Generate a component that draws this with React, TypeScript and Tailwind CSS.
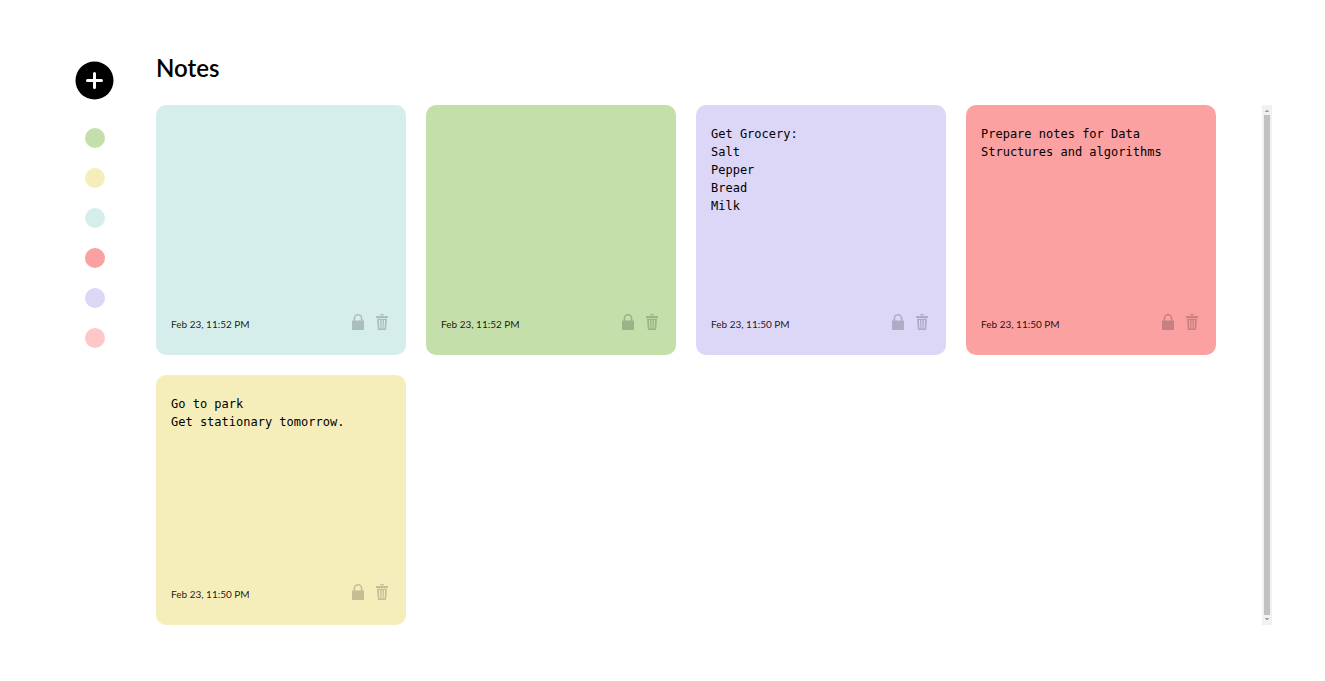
import { useState } from "react";

type Note = { id: number; text: string; color: string; date: string };

const palette = [
  { name: "Green", bg: "bg-[#c5dfaa]" },
  { name: "Yellow", bg: "bg-[#f5eebb]" },
  { name: "Aqua", bg: "bg-[#d6eeeb]" },
  { name: "Red", bg: "bg-[#fba1a1]" },
  { name: "Lavender", bg: "bg-[#dcd6f7]" },
  { name: "Pink", bg: "bg-[#ffc7c7]" },
];

const initialNotes: Note[] = [
  { id: 5, text: "", color: "bg-[#d6eeeb]", date: "Feb 23, 11:52 PM" },
  { id: 4, text: "", color: "bg-[#c5dfaa]", date: "Feb 23, 11:52 PM" },
  { id: 3, text: "Get Grocery:\nSalt\nPepper\nBread\nMilk", color: "bg-[#dcd6f7]", date: "Feb 23, 11:50 PM" },
  { id: 2, text: "Prepare notes for Data Structures and algorithms", color: "bg-[#fba1a1]", date: "Feb 23, 11:50 PM" },
  { id: 1, text: "Go to park\nGet stationary tomorrow.", color: "bg-[#f5eebb]", date: "Feb 23, 11:50 PM" },
];

function LockIcon() {
  return (
    <svg width="12" height="16" viewBox="0 0 12 16" aria-hidden="true">
      <path
        d="M0 7Q0 6.4.6 6.4H1.6V4.4a4.4 4.4 0 0 1 8.8 0V6.4h1Q12 6.4 12 7v8.4Q12 16 11.4 16H.6Q0 16 0 15.4zM3.2 6.4h5.6V4.4a2.8 2.8 0 0 0-5.6 0z"
        fill="currentColor"
        fillRule="evenodd"
      />
    </svg>
  );
}

function TrashIcon() {
  return (
    <svg width="12" height="16" viewBox="0 0 12 16" aria-hidden="true">
      <path
        d="M4 1.2Q4 0 5 0h2q1 0 1 1.2zM.5 2h11q.5 0 .5.5V4H0V2.5Q0 2 .5 2z"
        fill="currentColor"
      />
      <path
        fillRule="evenodd"
        d="M1 4.8h10l-.8 10.4q-.1.8-.8.8H2.6q-.7 0-.8-.8zM2.9 6l.5 8.5h1L4 6zM5.5 6v8.5h1V6zM8 6l-.4 8.5h1L9.1 6z"
        fill="currentColor"
      />
    </svg>
  );
}

function NoteCard({ note, onEdit, onDelete }: { note: Note; onEdit: (text: string) => void; onDelete: () => void }) {
  return (
    <article className={`flex h-[250px] w-[250px] flex-col rounded-[10px] px-[15px] pt-5 pb-[23px] ${note.color}`}>
      <textarea
        aria-label="Note text"
        value={note.text}
        onChange={(e) => onEdit(e.target.value)}
        className="min-h-0 w-full flex-1 resize-none overflow-hidden bg-transparent font-['DejaVu_Sans_Mono',monospace] text-[12px] leading-[18px] text-black outline-none"
      />
      <footer className="flex items-end justify-between pr-[3px]">
        <time className="text-[10px] leading-4 text-black/90">{note.date}</time>
        <div className="flex gap-3 pb-0.5 text-black/20">
          <button type="button" aria-label="Lock note">
            <LockIcon />
          </button>
          <button type="button" aria-label="Delete note" onClick={onDelete}>
            <TrashIcon />
          </button>
        </div>
      </footer>
    </article>
  );
}

export default function App() {
  const [notes, setNotes] = useState(initialNotes);

  const addNote = (color: string) => {
    const now = new Date();
    const date = now
      .toLocaleString("en-US", { month: "short", day: "numeric", hour: "numeric", minute: "2-digit" });
    setNotes((list) => [{ id: now.getTime(), text: "", color, date }, ...list]);
  };

  return (
    <div className="flex min-h-screen bg-white px-[53px] pb-14 font-[Lato,sans-serif] text-black">
      <aside className="flex w-[103px] shrink-0 flex-col items-start gap-7 pt-[61px] pl-[22px]">
        <button type="button" aria-label="Add note" onClick={() => addNote(palette[0].bg)}>
          <svg width="39" height="39" viewBox="0 0 39 39" aria-hidden="true">
            <circle cx="19.5" cy="19.5" r="19" fill="#000" />
            <path d="M19.5 12.5v14M12.5 19.5h14" stroke="#fff" strokeWidth="3" strokeLinecap="round" />
          </svg>
        </button>
        <div className="flex w-10 flex-col items-center gap-5">
          {palette.map((c) => (
            <button
              key={c.name}
              type="button"
              aria-label={`Add ${c.name} note`}
              onClick={() => addNote(c.bg)}
              className={`size-5 rounded-full ${c.bg}`}
            />
          ))}
        </div>
      </aside>
      <main className="flex min-w-0 flex-1 flex-col pt-[50px]">
        <h1 className="mb-[19px] text-2xl leading-9 font-semibold">Notes</h1>
        <div className="flex">
          <div className="flex min-w-0 flex-1 flex-wrap content-start gap-5">
            {notes.map((n) => (
              <NoteCard
                key={n.id}
                note={n}
                onEdit={(text) => setNotes((list) => list.map((m) => (m.id === n.id ? { ...m, text } : m)))}
                onDelete={() => setNotes((list) => list.filter((m) => m.id !== n.id))}
              />
            ))}
          </div>
          <div aria-hidden="true" className="flex w-[10px] shrink-0 flex-col items-center bg-[#f1f1f1] text-[#a3a3a3]">
            <svg width="10" height="10" viewBox="0 0 10 10">
              <path d="M4 5h2v1h1v1H3V6h1z" fill="currentColor" />
            </svg>
            <div className="w-[6px] flex-1 bg-[#c1c1c1]" />
            <svg width="10" height="10" viewBox="0 0 10 10">
              <path d="M3 3h4v1H6v1H4V4H3z" fill="currentColor" />
            </svg>
          </div>
        </div>
      </main>
    </div>
  );
}
